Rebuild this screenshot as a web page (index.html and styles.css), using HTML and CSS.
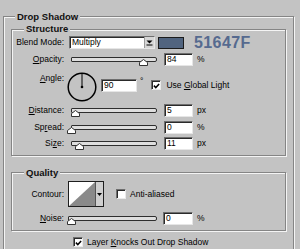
FILE: index.html
```html
<!DOCTYPE html>
<html>
<head>
<meta charset="utf-8">
<link rel="stylesheet" href="styles.css">
</head>
<body>
<div class="group outer">
  <div class="title">Drop Shadow</div>
  <div class="group inner structure">
    <div class="title">Structure</div>
    <div class="row blend">
      <span class="label">Blend Mode:</span>
      <span class="select">
        <span class="select-text">Multiply</span>
        <span class="select-btn"><svg width="7" height="6" viewBox="0 0 7 6"><path d="M0.5 0.5 H6.5 L3.5 3.5 Z" fill="#000"/><rect x="0.5" y="4.5" width="6" height="1" fill="#000"/></svg></span>
      </span>
      <span class="swatch"></span>
      <span class="hex">51647F</span>
    </div>
    <div class="row opacity">
      <span class="label"><u>O</u>pacity:</span>
      <span class="slider s-struct"><span class="track"></span><svg class="thumb" style="left:68px" width="9" height="7" viewBox="0 0 9 7"><path d="M4.5 0.5 L8.5 3.5 V6.5 H0.5 V3.5 Z" fill="#fff" stroke="#333"/></svg></span>
      <span class="field">84</span><span class="unit">%</span>
    </div>
    <div class="row angle">
      <span class="label"><u>A</u>ngle:</span>
      <svg class="dial" width="30" height="30" viewBox="0 0 30 30"><circle cx="15" cy="15" r="13.8" fill="none" stroke="#000" stroke-width="1.5"/><line x1="15" y1="15" x2="15" y2="2" stroke="#000" stroke-width="1"/><circle cx="15" cy="15" r="1.3" fill="#000"/></svg>
      <span class="field wide">90</span>
      <span class="deg">°</span>
      <span class="check on"><svg width="8" height="8" viewBox="0 0 8 8"><path d="M1 3.6 L3.2 5.8 L7 1.6" fill="none" stroke="#000" stroke-width="1.7"/></svg></span>
      <span class="check-text">Use <u>G</u>lobal Light</span>
    </div>
    <div class="row distance">
      <span class="label"><u>D</u>istance:</span>
      <span class="slider s-struct"><span class="track"></span><svg class="thumb" style="left:0px" width="9" height="7" viewBox="0 0 9 7"><path d="M4.5 0.5 L8.5 3.5 V6.5 H0.5 V3.5 Z" fill="#fff" stroke="#333"/></svg></span>
      <span class="field">5</span><span class="unit">px</span>
    </div>
    <div class="row spread">
      <span class="label">Sp<u>r</u>ead:</span>
      <span class="slider s-struct"><span class="track"></span><svg class="thumb" style="left:-4px" width="9" height="7" viewBox="0 0 9 7"><path d="M4.5 0.5 L8.5 3.5 V6.5 H0.5 V3.5 Z" fill="#fff" stroke="#333"/></svg></span>
      <span class="field">0</span><span class="unit">%</span>
    </div>
    <div class="row size">
      <span class="label">Si<u>z</u>e:</span>
      <span class="slider s-struct"><span class="track"></span><svg class="thumb" style="left:4px" width="9" height="7" viewBox="0 0 9 7"><path d="M4.5 0.5 L8.5 3.5 V6.5 H0.5 V3.5 Z" fill="#fff" stroke="#333"/></svg></span>
      <span class="field">11</span><span class="unit">px</span>
    </div>
  </div>
  <div class="group inner quality">
    <div class="title">Quality</div>
    <div class="row contour">
      <span class="label">Contour:</span>
      <span class="contour-box">
        <svg class="curve" width="26" height="24" viewBox="0 0 26 24"><rect width="26" height="24" fill="#fff"/><path d="M0 24 L26 0 V24 Z" fill="#8a8a8a"/></svg>
        <span class="contour-btn"><svg width="5" height="3" viewBox="0 0 5 3"><path d="M0 0 H5 L2.5 3 Z" fill="#000"/></svg></span>
      </span>
      <span class="check anti"></span>
      <span class="check-text">Anti-aliased</span>
    </div>
    <div class="row noise">
      <span class="label"><u>N</u>oise:</span>
      <span class="slider s-quality"><span class="track"></span><svg class="thumb" style="left:-1px" width="9" height="7" viewBox="0 0 9 7"><path d="M4.5 0.5 L8.5 3.5 V6.5 H0.5 V3.5 Z" fill="#fff" stroke="#333"/></svg></span>
      <span class="field">0</span><span class="unit">%</span>
    </div>
  </div>
  <div class="knock">
    <span class="check on"><svg width="8" height="8" viewBox="0 0 8 8"><path d="M1 3.6 L3.2 5.8 L7 1.6" fill="none" stroke="#000" stroke-width="1.7"/></svg></span>
    <span class="check-text">Layer <u>K</u>nocks Out Drop Shadow</span>
  </div>
</div>
</body>
</html>
```

FILE: styles.css
```css
* { box-sizing: border-box; }

body {
  margin: 0;
  width: 300px;
  height: 249px;
  overflow: hidden;
  background: #c3c3c3;
  font-family: "Liberation Sans", Arial, sans-serif;
  font-size: 8.5px;
  color: #000;
}

u { text-decoration: underline; text-underline-offset: 1px; }

.group {
  border: 1px solid #858585;
  box-shadow: inset 1px 1px 0 #f4f4f4, 1px 1px 0 #f4f4f4;
}

.outer {
  margin: 16px 0 0 3px;
  width: 291px;
  height: 233px;
  border-bottom: 0;
}

.title {
  width: fit-content;
  background: #c3c3c3;
  font-weight: bold;
  font-size: 9.5px;
  line-height: 12px;
  padding: 0 2px;
  color: #111;
}

.outer > .title { margin: -6px 0 0 11px; }

.inner {
  margin-left: 7px;
  width: 275px;
}

.structure { margin-top: 6px; padding-bottom: 5px; }
.structure > .title { margin: -7px 0 0 12px; }

.quality { margin-top: 16px; padding-bottom: 5px; }
.quality > .title { margin: -6px 0 0 12px; }

.row {
  display: flex;
  align-items: center;
  height: 13px;
}

.label {
  width: 52px;
  flex: none;
  text-align: right;
  white-space: nowrap;
  line-height: 13px;
}

.blend { margin-top: 1px; }
.opacity { margin-top: 4px; }
.angle { margin-top: 6px; height: 30px; align-items: flex-start; }
.distance { margin-top: 2px; }
.spread { margin-top: 4px; }
.size { margin-top: 3px; }

.select {
  margin-left: 5px;
  width: 86px;
  height: 13px;
  display: flex;
  background: #fff;
  border: 1px solid;
  border-color: #6e6e6e #e6e6e6 #e6e6e6 #6e6e6e;
  box-shadow: inset 1px 1px 0 #2a2a2a;
}
.select-text { flex: 1; padding-left: 2px; line-height: 11px; }
.select-btn {
  width: 10px;
  display: flex;
  align-items: center;
  justify-content: center;
  background: #d6d6d6;
  border-left: 1px solid #9a9a9a;
}

.swatch {
  margin-left: 3px;
  width: 26px;
  height: 12px;
  background: #51647f;
  border: 1px solid #1c1c1c;
}

.hex {
  margin-left: 10px;
  font-size: 16px;
  font-weight: bold;
  line-height: 13px;
  letter-spacing: 0.4px;
  color: #566a8f;
  align-self: flex-start;
}

.slider {
  position: relative;
  height: 13px;
  flex: none;
}
.s-struct { margin-left: 7px; width: 86px; }
.s-quality { margin-left: 4px; width: 89px; }

.track {
  display: block;
  margin-top: 4px;
  height: 5px;
  border: 1px solid #2e2e2e;
  border-radius: 1px 2px 2px 1px;
  background: #dedede;
}

.thumb {
  position: absolute;
  top: 6px;
}

.field {
  margin-left: 7px;
  width: 29px;
  height: 13px;
  flex: none;
  background: #fff;
  border: 1px solid;
  border-color: #6e6e6e #e6e6e6 #e6e6e6 #6e6e6e;
  box-shadow: inset 1px 1px 0 #2a2a2a;
  padding-left: 2px;
  line-height: 11px;
}
.noise .field { margin-left: 6px; width: 30px; }

.unit { margin-left: 4px; line-height: 13px; }

.dial { margin-left: 3px; flex: none; }
.angle .field.wide { margin-left: 4px; margin-top: 7px; width: 36px; }
.deg { margin-left: 3px; margin-top: 4px; line-height: 10px; color: #000; }

.check {
  width: 10px;
  height: 10px;
  flex: none;
  display: flex;
  align-items: center;
  justify-content: center;
  background: #fff;
  border: 1px solid;
  border-color: #6e6e6e #eaeaea #eaeaea #6e6e6e;
  box-shadow: inset 1px 1px 0 #2a2a2a;
}
.check svg { margin: 1px 0 0 1px; }
.angle .check { margin-left: 8px; margin-top: 8px; }
.angle .check-text { margin-top: 8px; line-height: 11px; }
.check-text { margin-left: 5px; white-space: nowrap; line-height: 11px; }

.contour { margin-top: 2px; height: 26px; }
.contour-box {
  margin-left: 4px;
  width: 36px;
  height: 26px;
  display: flex;
  border: 1px solid #1e1e1e;
  background: #fff;
}
.curve { display: block; flex: none; }
.contour-btn {
  flex: 1;
  display: flex;
  align-items: center;
  justify-content: center;
  background: #cfcfcf;
  border-left: 1px solid #555;
}
.check.anti { margin-left: 12px; }
.contour .check-text { margin-left: 4px; }

.noise { margin-top: 5px; }

.knock {
  display: flex;
  align-items: center;
  margin: 6px 0 0 69px;
  height: 10px;
}
.knock .check-text { margin-left: 4px; }
```
